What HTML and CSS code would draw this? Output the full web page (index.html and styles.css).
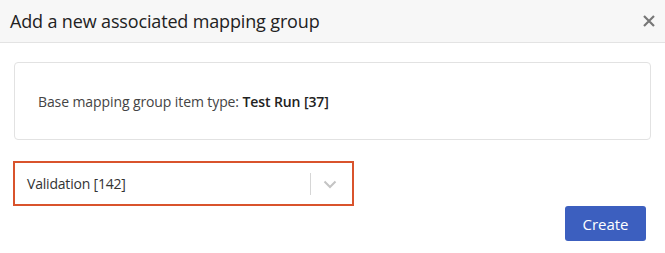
FILE: index.html
```html
<!DOCTYPE html>
<html>
<head>
<meta charset="utf-8">
<link rel="stylesheet" href="styles.css">
</head>
<body>
<div class="dialog">
  <div class="header">
    <span class="title">Add a new associated mapping group</span>
    <span class="close" aria-label="Close">
      <svg width="12" height="12" viewBox="0 0 12 12"><path d="M1 1 L11 11 M11 1 L1 11" stroke="#777" stroke-width="2.2" stroke-linecap="butt"/></svg>
    </span>
  </div>
  <div class="body">
    <div class="info"><span class="info-text">Base mapping group item type: <span class="strong">Test Run [37]</span></span></div>
    <div class="select">
      <span class="value">Validation [142]</span>
      <span class="sep"></span>
      <span class="chev"><svg width="14" height="9" viewBox="0 0 14 9"><path d="M1.5 1.5 L7 7 L12.5 1.5" fill="none" stroke="#c4c4c4" stroke-width="2"/></svg></span>
    </div>
    <div class="actions"><button class="btn">Create</button></div>
  </div>
</div>
</body>
</html>
```
FILE: styles.css
```css
* { box-sizing: border-box; }
html, body { margin: 0; padding: 0; background: #fff; }
body { font-family: "Open Sans", "Noto Sans", sans-serif; color: #333; width: 665px; height: 253px; overflow: hidden; }
.header {
  height: 43px;
  background: #f7f7f7;
  border-bottom: 1px solid #e3e3e3;
  display: flex;
  align-items: center;
  justify-content: space-between;
  padding: 0 8px 0 10px;
}
.title { font-size: 18px; color: #222; letter-spacing: -0.15px; }
.close { display: flex; width: 14px; justify-content: center; margin-right: 1px; }
.body { padding: 19px 14px 0 14px; }
.info {
  height: 78px;
  border: 1px solid #e2e2e2;
  border-radius: 4px;
  display: flex;
  align-items: center;
  padding-left: 23px;
}
.info-text { font-size: 14px; color: #444; letter-spacing: -0.1px; }
.strong { color: #222; font-weight: 600; }
.select {
  margin-top: 21px;
  margin-left: -1px;
  width: 341px;
  height: 45px;
  border: 2.5px solid #d9532c;
  display: flex;
  align-items: center;
  padding-left: 12px;
  padding-right: 3px;
}
.value { flex: 1; font-size: 14px; color: #333; letter-spacing: -0.2px; }
.sep { width: 1px; height: 22px; background: #d6d6d6; }
.chev { width: 38px; display: flex; justify-content: center; padding-top: 2px; }
.actions { display: flex; justify-content: flex-end; margin-right: 5px; }
.btn {
  width: 81px;
  height: 35px;
  background: #3c5fbf;
  color: #fff;
  border: none;
  border-radius: 3px;
  font-family: inherit;
  font-size: 15px;
  padding: 0;
}
```
